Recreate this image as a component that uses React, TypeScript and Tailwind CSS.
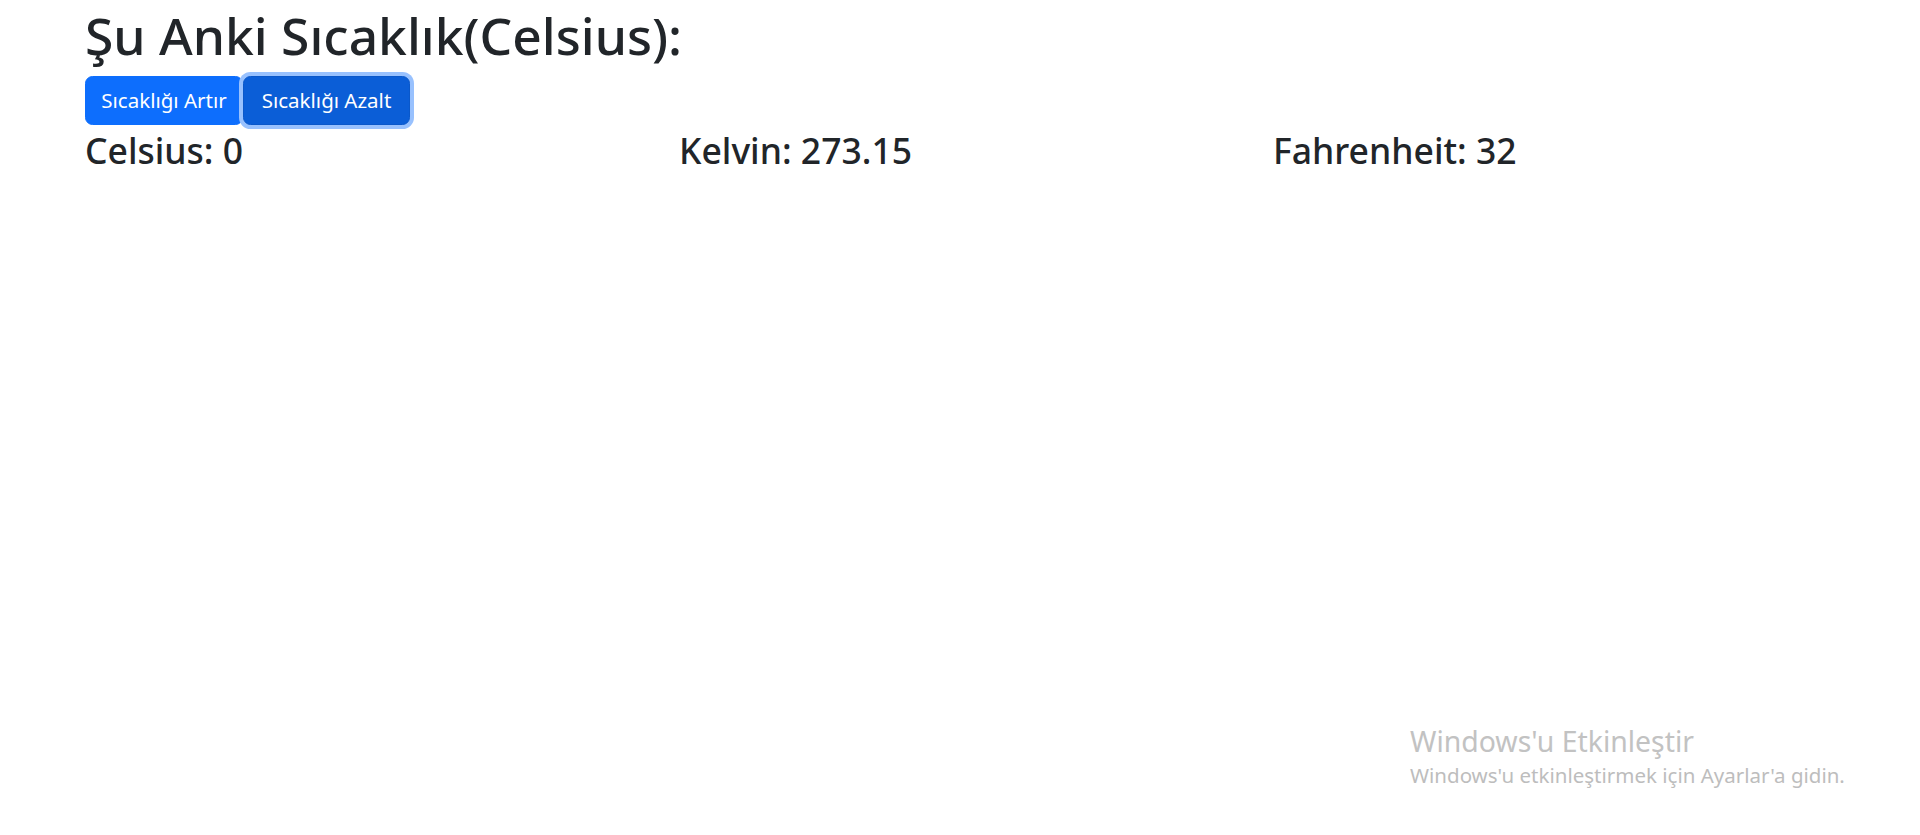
import React, { useState } from 'react';

const App: React.FC = () => {
  const [celsius, setCelsius] = useState(0);

  const kelvin = Math.round((celsius + 273.15) * 100) / 100;
  const fahrenheit = Math.round((celsius * 9 / 5 + 32) * 100) / 100;

  return (
    <div className="relative min-h-screen bg-white pl-[85px] text-[#212529] font-['Noto_Sans',sans-serif]">
      <h1 className="m-0 text-[51.5px] leading-[70px] font-medium">Şu Anki Sıcaklık(Celsius):</h1>

      <div className="mt-[6px] flex">
        <button
          type="button"
          className="h-[49px] w-[158px] rounded-[7.5px] border border-[#0d6efd] bg-[#0d6efd] text-[20.5px] text-white"
          onClick={() => setCelsius(celsius + 1)}
        >
          Sıcaklığı Artır
        </button>
        <button
          type="button"
          className="h-[49px] w-[167px] rounded-[7.5px] border border-[#0a58ca] bg-[#0b5ed7] text-[20.5px] text-white ring-[4px] ring-[#98c1fe]"
          onClick={() => setCelsius(celsius - 1)}
        >
          Sıcaklığı Azalt
        </button>
      </div>

      {/* Sonuçlar */}
      <div className="mt-[4px] grid w-[1782px] grid-cols-3">
        <h3 className="m-0 text-[35.5px] leading-[42px] font-medium">Celsius: {celsius}</h3>
        <h3 className="m-0 text-[35.5px] leading-[42px] font-medium">Kelvin: {kelvin}</h3>
        <h3 className="m-0 text-[35.5px] leading-[42px] font-medium">Fahrenheit: {fahrenheit}</h3>
      </div>

      {/* Windows watermark */}
      <div className="absolute left-[1410px] top-[722px] text-[#c2c2c2]">
        <div className="text-[28.4px] leading-[38px]">Windows'u Etkinleştir</div>
        <div className="mt-[2px] text-[20.5px] leading-[26px] text-[#bdbdbd]">Windows'u etkinleştirmek için Ayarlar'a gidin.</div>
      </div>
    </div>
  );
};

export default App;
